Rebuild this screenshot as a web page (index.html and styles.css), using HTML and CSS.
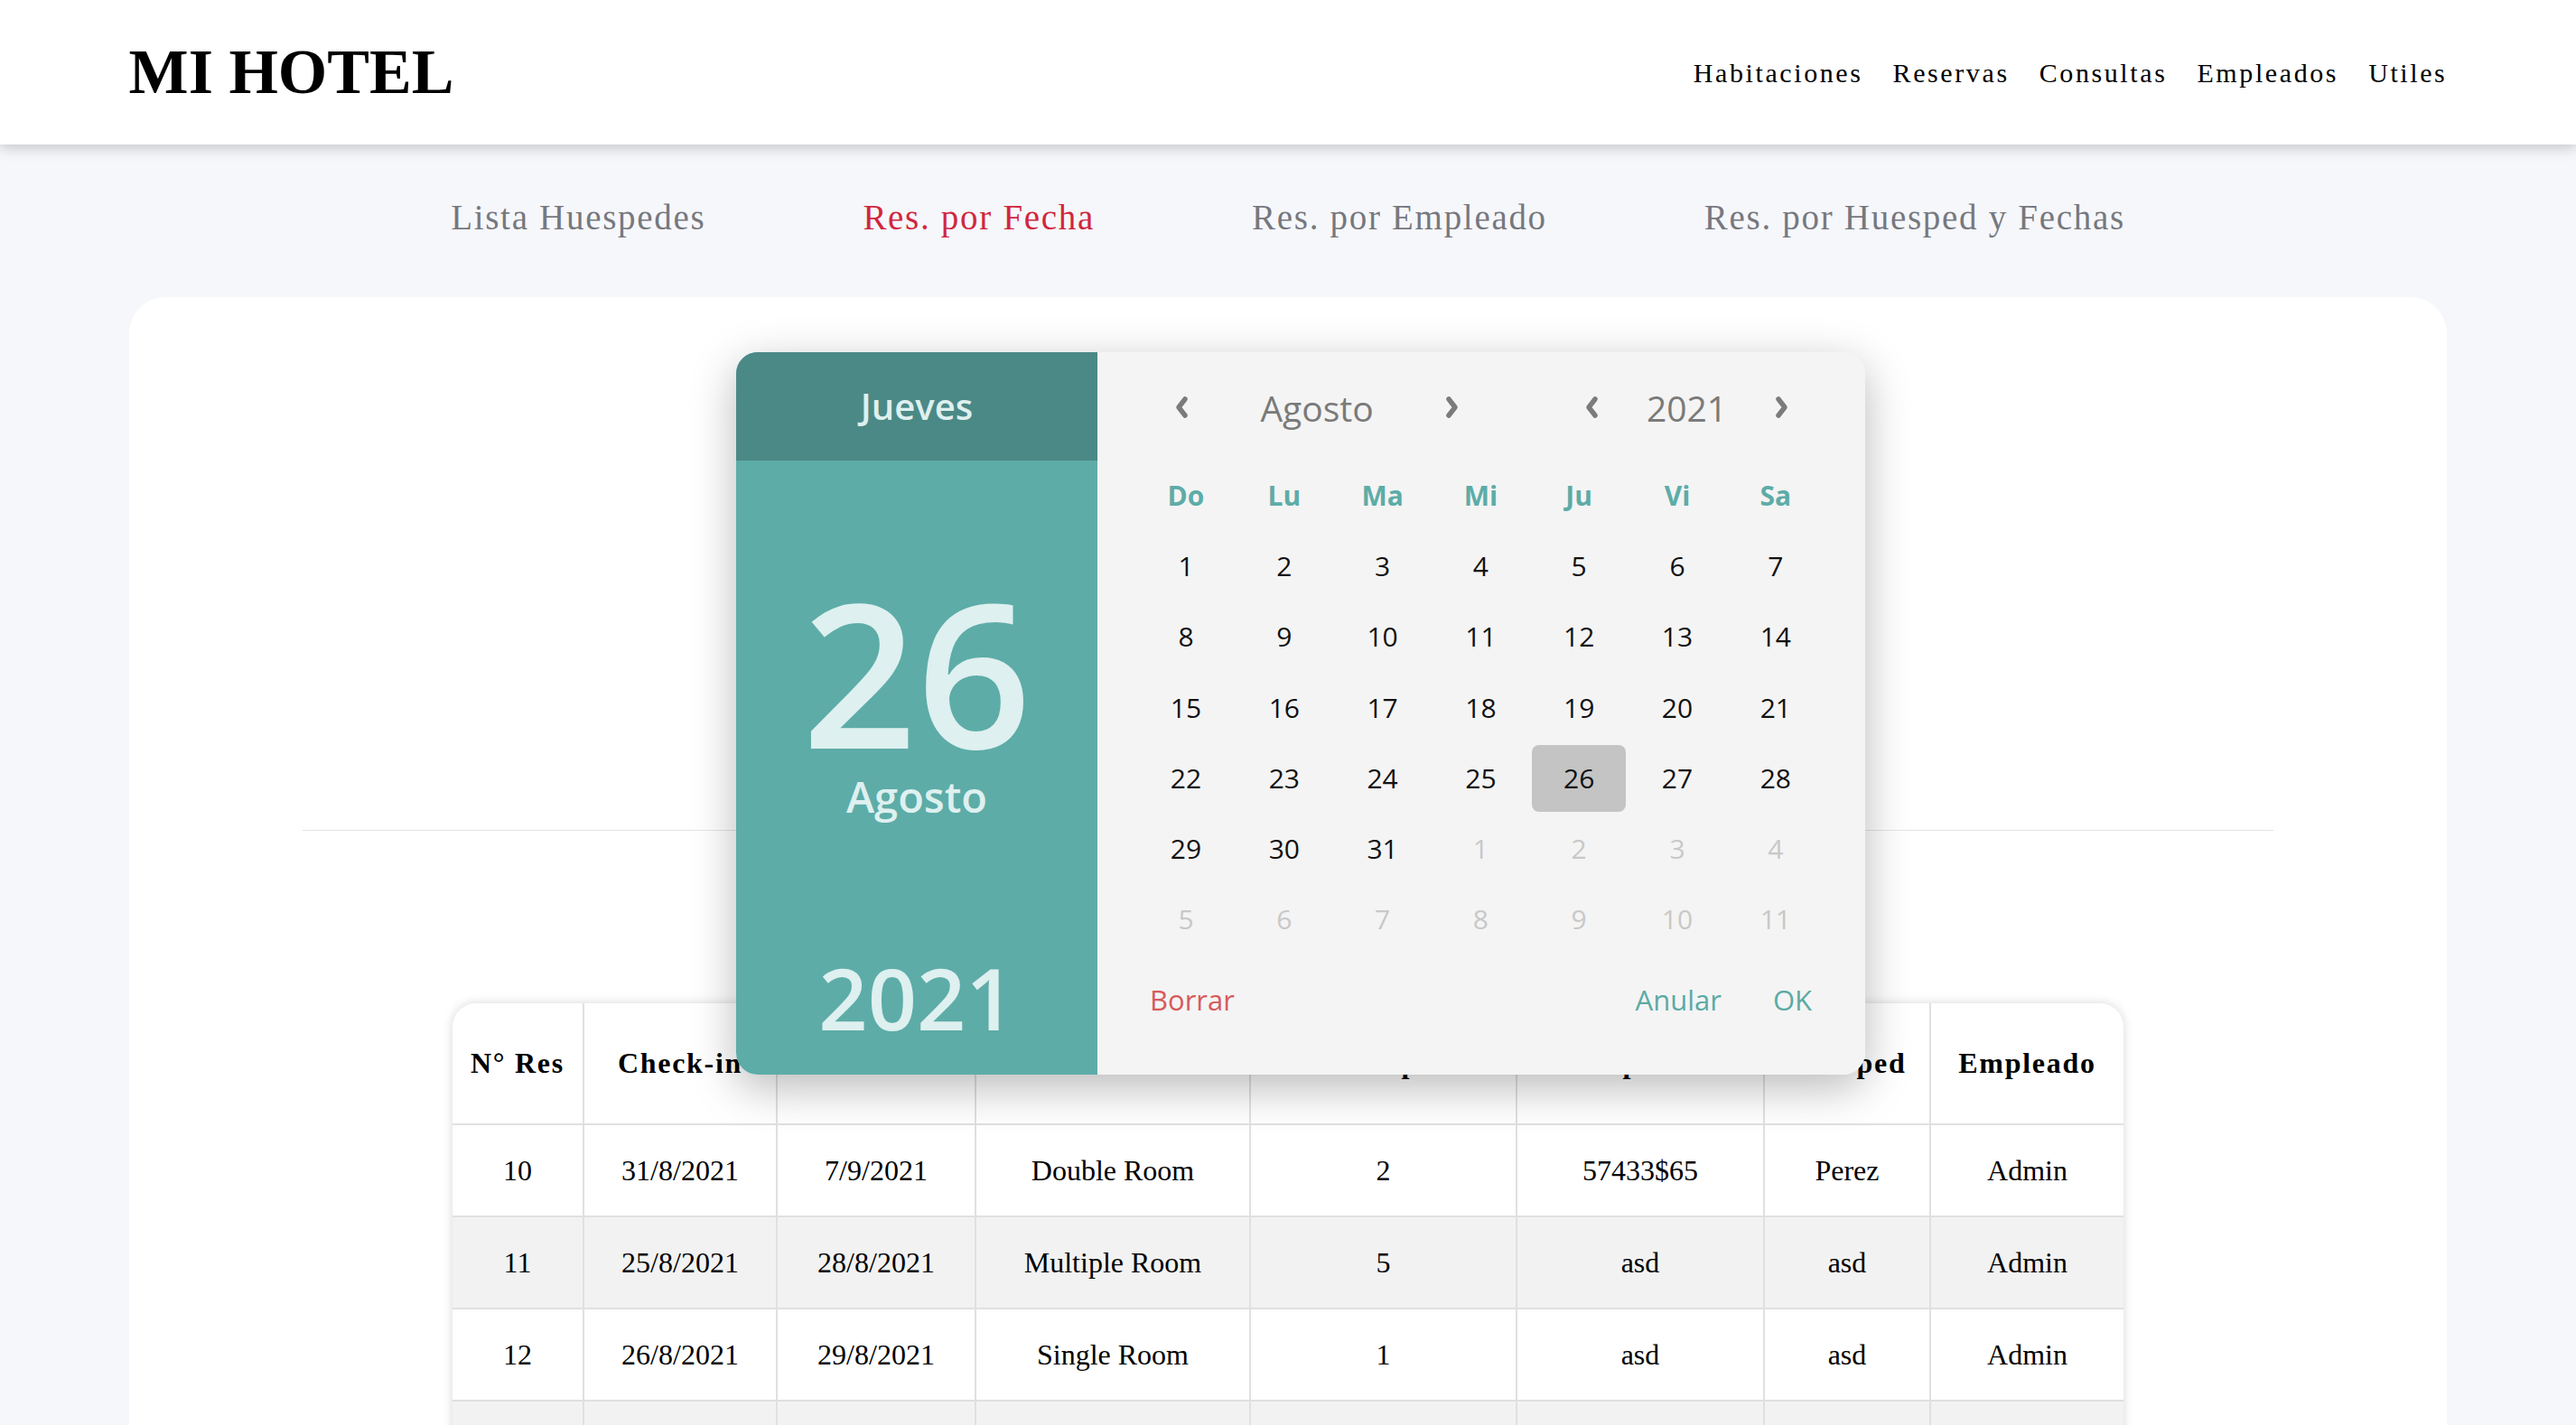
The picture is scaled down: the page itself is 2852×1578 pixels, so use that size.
FILE: index.html
```html
<!DOCTYPE html>
<html lang="es">
<head>
<meta charset="utf-8">
<title>Mi Hotel</title>
<link rel="stylesheet" href="styles.css">
</head>
<body>
<header class="topbar">
  <div class="topbar-inner">
    <div class="logo">MI HOTEL</div>
    <nav class="main-nav">
      <a class="main-link">Habitaciones</a>
      <a class="main-link">Reservas</a>
      <a class="main-link">Consultas</a>
      <a class="main-link">Empleados</a>
      <a class="main-link">Utiles</a>
    </nav>
  </div>
</header>

<nav class="subnav">
  <a class="sub-link">Lista Huespedes</a>
  <a class="sub-link active">Res. por Fecha</a>
  <a class="sub-link">Res. por Empleado</a>
  <a class="sub-link">Res. por Huesped y Fechas</a>
</nav>

<main class="card">
  <div class="form-area"></div>
  <hr class="divider">
  <div class="table-wrap">
    <table class="res-table">
      <thead>
        <tr>
          <th class="c1">N° Res</th>
          <th class="c2">Check-in</th>
          <th class="c3">Check-out</th>
          <th class="c4">Habitación</th>
          <th class="c5">N° Huespedes</th>
          <th class="c6">Importe</th>
          <th class="c7">Huesped</th>
          <th class="c8">Empleado</th>
        </tr>
      </thead>
      <tbody>
        <tr><td>10</td><td>31/8/2021</td><td>7/9/2021</td><td>Double Room</td><td>2</td><td>57433$65</td><td>Perez</td><td>Admin</td></tr>
        <tr class="alt"><td>11</td><td>25/8/2021</td><td>28/8/2021</td><td>Multiple Room</td><td>5</td><td>asd</td><td>asd</td><td>Admin</td></tr>
        <tr><td>12</td><td>26/8/2021</td><td>29/8/2021</td><td>Single Room</td><td>1</td><td>asd</td><td>asd</td><td>Admin</td></tr>
        <tr class="alt"><td>13</td><td>26/8/2021</td><td>30/8/2021</td><td>Double Room</td><td>2</td><td>asd</td><td>asd</td><td>Admin</td></tr>
      </tbody>
    </table>
  </div>
</main>

<div class="picker">
  <div class="pk-left">
    <div class="pk-weekday">Jueves</div>
    <div class="pk-day">26</div>
    <div class="pk-month">Agosto</div>
    <div class="pk-year">2021</div>
  </div>
  <div class="pk-right">
    <div class="pk-head">
      <svg class="chev first" viewBox="0 0 19 26"><polyline points="13,4 6,13 13,22"/></svg>
      <div class="pk-label month-label">Agosto</div>
      <svg class="chev" viewBox="0 0 19 26"><polyline points="6,4 13,13 6,22"/></svg>
      <svg class="chev year-prev" viewBox="0 0 19 26"><polyline points="13,4 6,13 13,22"/></svg>
      <div class="pk-label year-label">2021</div>
      <svg class="chev" viewBox="0 0 19 26"><polyline points="6,4 13,13 6,22"/></svg>
    </div>
    <div class="pk-grid">
      <div class="wd">Do</div><div class="wd">Lu</div><div class="wd">Ma</div><div class="wd">Mi</div><div class="wd">Ju</div><div class="wd">Vi</div><div class="wd">Sa</div>
      <div class="dd">1</div><div class="dd">2</div><div class="dd">3</div><div class="dd">4</div><div class="dd">5</div><div class="dd">6</div><div class="dd">7</div>
      <div class="dd">8</div><div class="dd">9</div><div class="dd">10</div><div class="dd">11</div><div class="dd">12</div><div class="dd">13</div><div class="dd">14</div>
      <div class="dd">15</div><div class="dd">16</div><div class="dd">17</div><div class="dd">18</div><div class="dd">19</div><div class="dd">20</div><div class="dd">21</div>
      <div class="dd">22</div><div class="dd">23</div><div class="dd">24</div><div class="dd">25</div><div class="dd sel">26</div><div class="dd">27</div><div class="dd">28</div>
      <div class="dd">29</div><div class="dd">30</div><div class="dd">31</div><div class="dd off">1</div><div class="dd off">2</div><div class="dd off">3</div><div class="dd off">4</div>
      <div class="dd off">5</div><div class="dd off">6</div><div class="dd off">7</div><div class="dd off">8</div><div class="dd off">9</div><div class="dd off">10</div><div class="dd off">11</div>
    </div>
    <div class="pk-foot">
      <span class="btn-clear">Borrar</span>
      <span class="foot-right">
        <span class="btn-ok">Anular</span>
        <span class="btn-ok">OK</span>
      </span>
    </div>
  </div>
</div>
</body>
</html>
```

FILE: styles.css
```css
html {
  scrollbar-width: none;
}
html::-webkit-scrollbar {
  display: none;
}
body {
  margin: 0;
  background: #f6f7fb;
  font-family: "Liberation Serif", "Times New Roman", serif;
  color: #000;
  position: relative;
  overflow: hidden;
  height: 1578px;
}

/* ---------- top bar ---------- */
.topbar {
  position: relative;
  z-index: 2;
  background: #fff;
  height: 160px;
  box-shadow: 0 4px 14px rgba(0, 0, 0, 0.2);
}
.topbar-inner {
  width: 90%;
  height: 100%;
  margin: 0 auto;
  display: flex;
  align-items: center;
  justify-content: space-between;
}
.logo {
  font-weight: 700;
  font-size: 70px;
  line-height: 1;
}
.main-nav {
  display: flex;
  gap: 33px;
  padding-top: 2px;
}
.main-link {
  font-size: 30px;
  line-height: 1;
  letter-spacing: 2.6px;
  color: #000;
}

/* ---------- sub nav ---------- */
.subnav {
  display: flex;
  justify-content: center;
  gap: 174px;
  padding-top: 61px;
}
.sub-link {
  font-size: 39px;
  line-height: 1;
  letter-spacing: 1.7px;
  color: #76787e;
}
.sub-link.active {
  color: #d0273e;
}

/* ---------- card ---------- */
.card {
  display: block;
  width: 90%;
  margin: 69px auto 0;
  background: #fff;
  border-radius: 40px;
  padding-bottom: 80px;
}
.form-area {
  height: 590px;
}
.divider {
  width: 85%;
  margin: 0 auto;
  border: 0;
  border-top: 1px solid #e3e3e6;
  height: 0;
}
.table-wrap {
  width: 1850px;
  margin: 191px auto 0;
  border-radius: 26px;
  overflow: hidden;
  box-shadow: 0 0 12px rgba(0, 0, 0, 0.16);
  background: #fff;
}
.res-table {
  width: 1850px;
  border-collapse: collapse;
  table-layout: fixed;
  text-align: center;
}
.res-table th {
  height: 133px;
  padding: 0;
  font-size: 32px;
  font-weight: 700;
  letter-spacing: 1.7px;
  border-right: 2px solid #e0e0e0;
  border-bottom: 2px solid #e0e0e0;
}
.res-table td {
  height: 100px;
  padding: 0;
  font-size: 32px;
  border-right: 2px solid #e0e0e0;
  border-bottom: 2px solid #e0e0e0;
}
.res-table th:last-child,
.res-table td:last-child {
  border-right: 0;
}
.res-table tr.alt td {
  background: #f2f2f2;
}
.c1 { width: 144px; }
.c2 { width: 212px; }
.c3 { width: 218px; }
.c4 { width: 302px; }
.c5 { width: 293px; }
.c6 { width: 272px; }
.c7 { width: 182px; }
.c8 { width: 213px; }

/* ---------- date picker ---------- */
.picker {
  position: absolute;
  left: 815px;
  top: 390px;
  width: 1250px;
  height: 800px;
  display: flex;
  border-radius: 24px;
  overflow: hidden;
  box-shadow: 0 14px 50px rgba(0, 0, 0, 0.28);
  font-family: "Open Sans", "Noto Sans", sans-serif;
  z-index: 5;
}
.pk-left {
  width: 400px;
  background: #5dacA8;
  display: flex;
  flex-direction: column;
  align-items: center;
  color: #def0ef;
}
.pk-weekday {
  width: 100%;
  height: 120px;
  background: #4b8986;
  text-align: center;
  font-size: 40px;
  line-height: 120px;
  font-weight: 600;
}
.pk-day {
  margin-top: 122px;
  font-size: 222px;
  line-height: 1;
  font-weight: 600;
}
.pk-month {
  margin-top: 5px;
  font-size: 47px;
  line-height: 1;
  font-weight: 600;
}
.pk-year {
  margin-top: auto;
  margin-bottom: 38px;
  font-size: 95px;
  line-height: 1;
  font-weight: 600;
}
.pk-right {
  flex: 1;
  background: #f4f4f4;
  padding: 0 47px 0 46px;
  display: flex;
  flex-direction: column;
}
.pk-head {
  height: 122px;
  display: flex;
  align-items: center;
}
.chev {
  width: 19px;
  height: 26px;
  flex: none;
}
.chev polyline {
  fill: none;
  stroke: #7b7b7b;
  stroke-width: 5.5;
  stroke-linecap: round;
  stroke-linejoin: round;
}
.chev.first {
  margin-left: 38px;
}
.chev.year-prev {
  margin-left: 136px;
}
.pk-label {
  font-size: 39px;
  line-height: 1;
  color: #7a7a7a;
  font-weight: 500;
  text-align: center;
}
.month-label {
  width: 280px;
}
.year-label {
  width: 191px;
}
.pk-grid {
  display: grid;
  grid-template-columns: repeat(7, 104px);
  grid-auto-rows: 74px;
  column-gap: 4.8px;
  row-gap: 4.2px;
}
.wd,
.dd {
  display: flex;
  align-items: center;
  justify-content: center;
  font-size: 30px;
  line-height: 1;
}
.wd {
  color: #5dacA8;
  font-weight: 700;
}
.dd {
  color: #111;
}
.dd.off {
  color: #c8c8c8;
}
.dd.sel {
  background: #c4c4c4;
  border-radius: 8px;
}
.pk-foot {
  margin-top: 37px;
  padding: 0 12px;
  display: flex;
  justify-content: space-between;
  font-size: 31px;
  line-height: 1;
  font-weight: 500;
}
.btn-clear {
  color: #d65b5b;
}
.foot-right {
  display: flex;
  gap: 57px;
}
.btn-ok {
  color: #5aaaa6;
}
```
